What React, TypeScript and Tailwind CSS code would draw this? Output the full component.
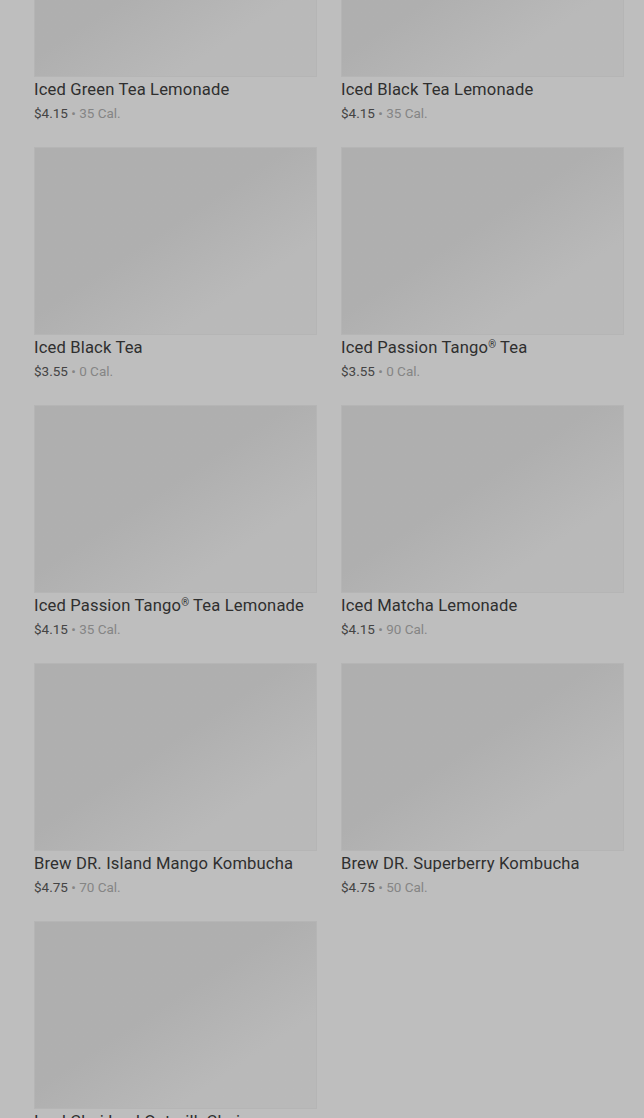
import React from "react";

type Item = { name: string; price: string; cal: string };

const items: Item[] = [
  { name: "Iced Green Tea Lemonade", price: "$4.15", cal: "35 Cal." },
  { name: "Iced Black Tea Lemonade", price: "$4.15", cal: "35 Cal." },
  { name: "Iced Black Tea", price: "$3.55", cal: "0 Cal." },
  { name: "Iced Passion Tango® Tea", price: "$3.55", cal: "0 Cal." },
  { name: "Iced Passion Tango® Tea Lemonade", price: "$4.15", cal: "35 Cal." },
  { name: "Iced Matcha Lemonade", price: "$4.15", cal: "90 Cal." },
  { name: "Brew DR. Island Mango Kombucha", price: "$4.75", cal: "70 Cal." },
  { name: "Brew DR. Superberry Kombucha", price: "$4.75", cal: "50 Cal." },
  { name: "Iced Chai Iced Oatmilk Chai", price: "$4.75", cal: "190 Cal." },
];

function Name({ text }: { text: string }) {
  const parts = text.split("®");
  return (
    <>
      {parts.map((p, i) => (
        <React.Fragment key={i}>
          {p}
          {i < parts.length - 1 && (
            <span className="text-[10px] align-[5px] leading-none">®</span>
          )}
        </React.Fragment>
      ))}
    </>
  );
}

export default function App() {
  return (
    <div
      className="w-[644px] h-[1118px] overflow-hidden bg-[#bebebe]"
      style={{ fontFamily: "Roboto, 'Liberation Sans', sans-serif" }}
    >
      <div className="grid grid-cols-2 gap-x-[24px] gap-y-[25px] pl-[34px] pr-[20px] mt-[-111px]">
        {items.map((it) => (
          <div key={it.name} className="flex flex-col">
            <div className="h-[188px] w-full bg-linear-to-br from-[#afafaf] from-45% to-[#b9b9b9] to-75% border border-[#b5b5b5]" />
            <div className="mt-[2px] leading-[22px] text-[16.6px] font-normal text-[#2f2f2f] tracking-[0.15px] whitespace-nowrap">
              <Name text={it.name} />
            </div>
            <div className="mt-[3px] leading-[18px] text-[13.5px]">
              <span className="text-[#444444]">{it.price}</span>
              <span className="text-[#858585]"> • {it.cal}</span>
            </div>
          </div>
        ))}
      </div>
    </div>
  );
}
